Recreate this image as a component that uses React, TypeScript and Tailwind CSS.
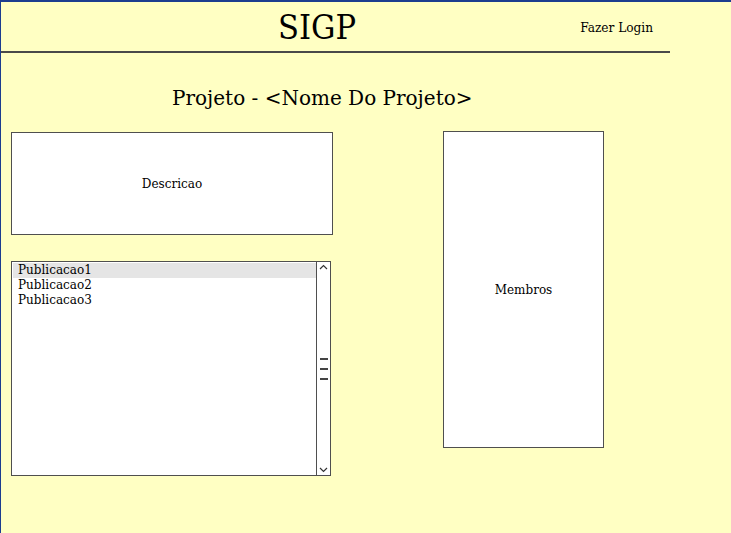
const serif = "font-['DejaVu_Serif',serif]";
const cond = "font-['DejaVu_Serif_Condensed','DejaVu_Serif',serif]";

const items = ["Publicacao1", "Publicacao2", "Publicacao3"];

const App = () => {
  return (
    <div className={`w-[731px] h-[533px] bg-[#ffffc3] border-t-2 border-l border-[#1c3d8f] text-black ${serif}`}>
      {/* Header */}
      <div className="w-[669px] h-[49px] flex items-center">
        <div className={`ml-[277px] text-[34px] leading-none ${cond}`}>SIGP</div>
        <div className={`ml-auto mr-[17px] text-[13.5px] mt-[2px] ${cond}`}>Fazer Login</div>
      </div>
      <div className="w-[669px] h-[2px] bg-[#4a4a4a]" />

      {/* Title */}
      <div className="mt-[33px] pl-[171px] text-[20px] leading-[24px]">
        Projeto - &lt;Nome Do Projeto&gt;
      </div>

      {/* Content */}
      <div className="mt-[21px] flex items-start">
        <div className="ml-[10px] mt-[1px] flex flex-col gap-[26px]">
          <div className="w-[322px] h-[103px] bg-white border-[1.5px] border-[#4f4f4f] flex items-center justify-center text-[12px]">
            Descricao
          </div>
          <div className="w-[320px] h-[215px] bg-white border-[1.5px] border-[#4f4f4f] flex text-[12px] leading-[15px]">
            <div className="flex-1 pt-[1px] pl-[1px]">
              {items.map((it, i) => (
                <div key={it} className={`pl-[5px] ${i === 0 ? "bg-[#e5e5e5]" : ""}`}>
                  {it}
                </div>
              ))}
            </div>
            <div className="w-[14px] border-l-[1.5px] border-[#4f4f4f] flex flex-col items-center py-[2px]">
              <svg width="9" height="6" viewBox="0 0 9 6">
                <path d="M1 5 L4.5 1.5 L8 5" fill="none" stroke="#333" strokeWidth="1.2" />
              </svg>
              <div className="flex flex-col gap-[8.5px] mt-[88px]">
                <div className="w-[8px] h-[1.5px] bg-[#444]" />
                <div className="w-[8px] h-[1.5px] bg-[#444]" />
                <div className="w-[8px] h-[1.5px] bg-[#444]" />
              </div>
              <svg width="9" height="6" viewBox="0 0 9 6" className="mt-auto">
                <path d="M1 1 L4.5 4.5 L8 1" fill="none" stroke="#333" strokeWidth="1.2" />
              </svg>
            </div>
          </div>
        </div>
        <div className="ml-[110px] w-[161px] h-[317px] bg-white border-[1.5px] border-[#4f4f4f] flex items-center justify-center text-[12px]">
          Membros
        </div>
      </div>
    </div>
  );
};

export default App;
